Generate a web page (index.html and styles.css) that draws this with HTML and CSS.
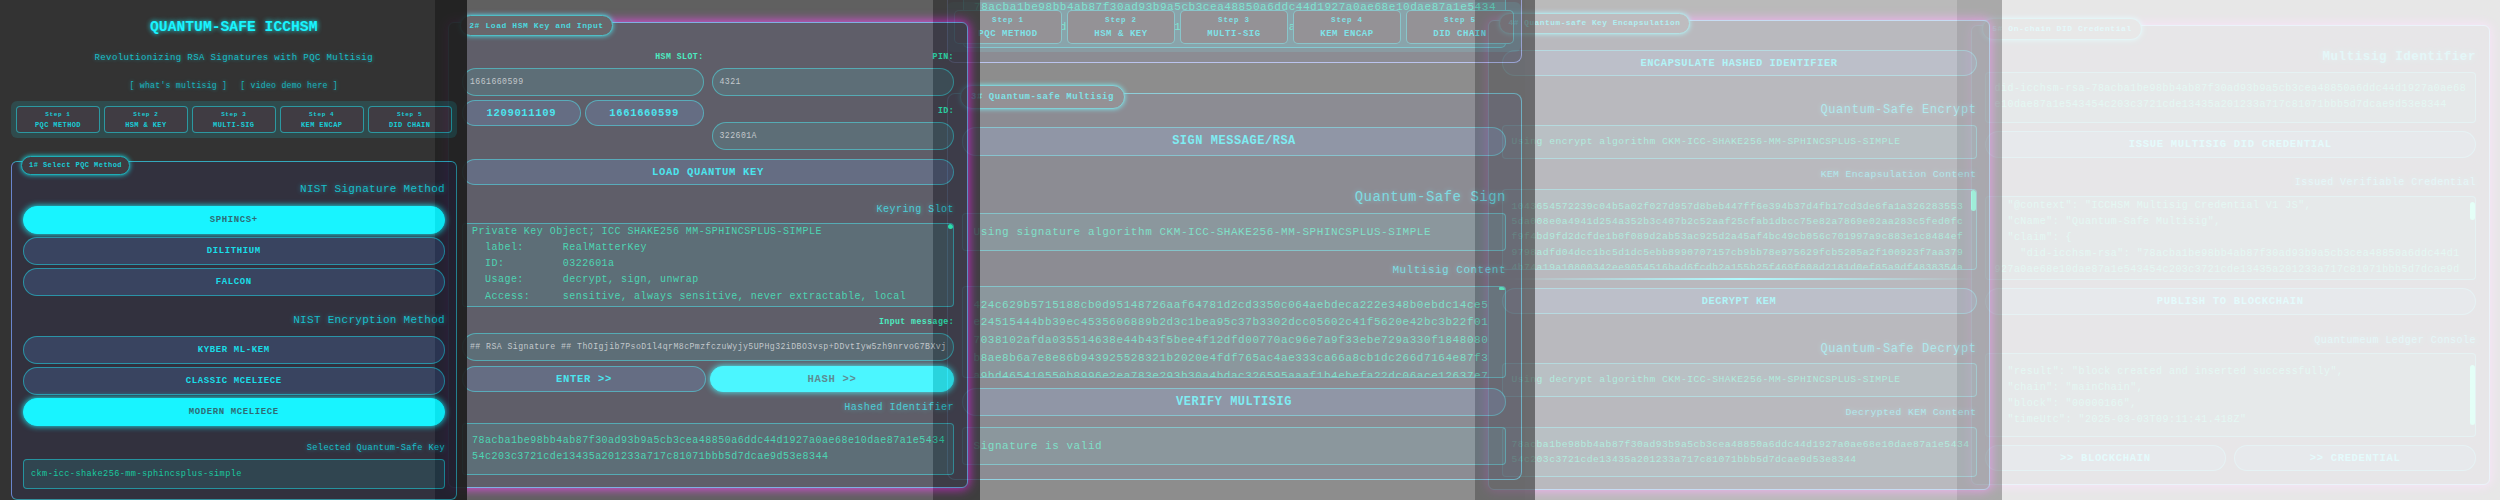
FILE: index.html
```html
<!DOCTYPE html>
<html lang="en">
<head>
<meta charset="utf-8">
<title>Quantum-Safe ICCHSM</title>
<link rel="stylesheet" href="styles.css">
</head>
<body>
<main class="strip">

<section class="slide slide-1">
  <h1 class="title">QUANTUM-SAFE ICCHSM</h1>
  <p class="subtitle">Revolutionizing RSA Signatures with PQC Multisig</p>
  <nav class="links"><a>[ what's multisig ]</a><a>[ video demo here ]</a></nav>
  <div class="steps">
    <div class="step"><span>Step 1</span><b>PQC METHOD</b></div>
    <div class="step"><span>Step 2</span><b>HSM &amp; KEY</b></div>
    <div class="step"><span>Step 3</span><b>MULTI-SIG</b></div>
    <div class="step"><span>Step 4</span><b>KEM ENCAP</b></div>
    <div class="step"><span>Step 5</span><b>DID CHAIN</b></div>
  </div>
  <div class="panel">
    <div class="pill">1# Select PQC Method</div>
    <h2 class="heading">NIST Signature Method</h2>
    <div class="btn active">SPHINCS+</div>
    <div class="btn">DILITHIUM</div>
    <div class="btn">FALCON</div>
    <h2 class="heading">NIST Encryption Method</h2>
    <div class="btn">KYBER ML-KEM</div>
    <div class="btn">CLASSIC MCELIECE</div>
    <div class="btn active">MODERN MCELIECE</div>
    <h3 class="label">Selected Quantum-Safe Key</h3>
    <div class="box one-line">ckm-icc-shake256-mm-sphincsplus-simple</div>
  </div>
</section>

<section class="slide slide-2">
  <div class="panel hot">
    <div class="pill">2# Load HSM Key and Input</div>
    <div class="fields">
      <div class="field-col">
        <div class="caption">HSM SLOT:</div>
        <div class="input">1661660599</div>
        <div class="pair"><div class="btn">1209011109</div><div class="btn">1661660599</div></div>
      </div>
      <div class="field-col">
        <div class="caption">PIN:</div>
        <div class="input">4321</div>
        <div class="caption second">ID:</div>
        <div class="input">322601A</div>
      </div>
    </div>
    <div class="btn">LOAD QUANTUM KEY</div>
    <h3 class="label">Keyring Slot</h3>
    <div class="box area"><pre class="lines">Private Key Object; ICC SHAKE256 MM-SPHINCSPLUS-SIMPLE
  label:      RealMatterKey
  ID:         0322601a
  Usage:      decrypt, sign, unwrap
  Access:     sensitive, always sensitive, never extractable, local</pre><i class="thumb"></i></div>
    <div class="caption">Input message:</div>
    <div class="input">## RSA Signature ## ThOIgjib7PsoD1l4qrM8cPmzfczuWyjy5UPHg32iDBO3vsp+DDvtIyw5zh9nrvoG7BXvj</div>
    <div class="pair"><div class="btn">ENTER &gt;&gt;</div><div class="btn active">HASH &gt;&gt;</div></div>
    <h3 class="label">Hashed Identifier</h3>
    <div class="box two-line"><pre class="lines">78acba1be98bb4ab87f30ad93b9a5cb3cea48850a6ddc44d1927a0ae68e10dae87a1e5434
54c203c3721cde13435a201233a717c81071bbb5d7dcae9d53e8344</pre></div>
  </div>
</section>

<section class="slide slide-3">
  <div class="panel-end"><div class="box-end"><pre class="lines">78acba1be98bb4ab87f30ad93b9a5cb3cea48850a6ddc44d1927a0ae68e10dae87a1e5434
54c203c3721cde13435a201233a717c81071bbb5d7dcae9d53e8344</pre></div></div>
  <div class="steps">
    <div class="step"><span>Step 1</span><b>PQC METHOD</b></div>
    <div class="step"><span>Step 2</span><b>HSM &amp; KEY</b></div>
    <div class="step"><span>Step 3</span><b>MULTI-SIG</b></div>
    <div class="step"><span>Step 4</span><b>KEM ENCAP</b></div>
    <div class="step"><span>Step 5</span><b>DID CHAIN</b></div>
  </div>
  <div class="panel">
    <div class="pill">3# Quantum-safe Multisig</div>
    <div class="btn">SIGN MESSAGE/RSA</div>
    <h2 class="heading">Quantum-Safe Sign</h2>
    <div class="box one-line">Using signature algorithm CKM-ICC-SHAKE256-MM-SPHINCSPLUS-SIMPLE</div>
    <h3 class="label">Multisig Content</h3>
    <div class="box area"><pre class="lines">424c629b5715188cb0d95148726aaf64781d2cd3350c064aebdeca222e348b0ebdc14ce5
e24515444bb39ec4535606889b2d3c1bea95c37b3302dcc05602c41f5620e42bc3b22f01
7038102afda035514638e44b43f5bee4f12dfd00770ac96e7a9f33ebe729a330f1848080
b8ae8b6a7e8e86b943925528321b2020e4fdf765ac4ae333ca66a8cb1dc266d7164e87f3
a9bd465410550b8996e2ea783e293b30a4bdac326595aaaf1b4ebefa22dc06ace12637e7</pre><i class="thumb"></i></div>
    <div class="btn">VERIFY MULTISIG</div>
    <div class="box one-line">Signature is valid</div>
  </div>
</section>

<section class="slide slide-4">
  <div class="panel hot">
    <div class="pill">4# Quantum-safe Key Encapsulation</div>
    <div class="btn">ENCAPSULATE HASHED IDENTIFIER</div>
    <h2 class="heading">Quantum-Safe Encrypt</h2>
    <div class="box one-line">Using encrypt algorithm CKM-ICC-SHAKE256-MM-SPHINCSPLUS-SIMPLE</div>
    <h3 class="label">KEM Encapsulation Content</h3>
    <div class="box area"><pre class="lines">1043654572239c04b5a02f027d957d8beb447ff6e394b37d4fb17cd3de6fa1a326283553
5da008e0a4941d254a352b3c407b2c52aaf25cfab1dbcc75e82a7869e02aa283c5fed0fc
f9f4bd9fd2dcfde1b0f089d2ab53ac925d2a45af4bc49cb056c701997a9c883e1c8484ef
9798adfd04dcc1bc5d1dc5ebb8990707157cb9bb78e975629fcb5205a2f100923f7aa379
4b74a19a10800342ee9054516bad6fcdb2a155b25f469f808d2181d0ef85a9df4838354a</pre><i class="thumb"></i></div>
    <div class="divider"></div>
    <div class="btn">DECRYPT KEM</div>
    <h2 class="heading">Quantum-Safe Decrypt</h2>
    <div class="box one-line">Using decrypt algorithm CKM-ICC-SHAKE256-MM-SPHINCSPLUS-SIMPLE</div>
    <h3 class="label">Decrypted KEM Content</h3>
    <div class="box two-line"><pre class="lines">78acba1be98bb4ab87f30ad93b9a5cb3cea48850a6ddc44d1927a0ae68e10dae87a1e5434
54c203c3721cde13435a201233a717c81071bbb5d7dcae9d53e8344</pre></div>
  </div>
</section>

<section class="slide slide-5">
  <div class="panel hot">
    <div class="pill">5# On-chain DID Credential</div>
    <h2 class="heading">Multisig Identifier</h2>
    <div class="box two-line"><pre class="lines">did-icchsm-rsa-78acba1be98bb4ab87f30ad93b9a5cb3cea48850a6ddc44d1927a0ae68
e10dae87a1e543454c203c3721cde13435a201233a717c81071bbb5d7dcae9d53e8344</pre></div>
    <div class="btn">ISSUE MULTISIG DID CREDENTIAL</div>
    <h3 class="label">Issued Verifiable Credential</h3>
    <div class="box area"><pre class="lines">  "@context": "ICCHSM Multisig Credential V1 JS",
  "cName": "Quantum-Safe Multisig",
  "claim": {
    "did-icchsm-rsa": "78acba1be98bb4ab87f30ad93b9a5cb3cea48850a6ddc44d1
927a0ae68e10dae87a1e543454c203c3721cde13435a201233a717c81071bbb5d7dcae9d</pre><i class="thumb"></i></div>
    <div class="btn">PUBLISH TO BLOCKCHAIN</div>
    <h3 class="label">Quantumeum Ledger Console</h3>
    <div class="box area ledger"><pre class="lines">  "result": "block created and inserted successfully",
  "chain": "mainChain",
  "block": "00000166",
  "timeUtc": "2025-03-03T09:11:41.418Z"</pre><i class="thumb"></i></div>
    <div class="pair"><div class="btn">&gt;&gt; BLOCKCHAIN</div><div class="btn">&gt;&gt; CREDENTIAL</div></div>
  </div>
</section>

</main>
</body>
</html>
```

FILE: styles.css
```css
* { box-sizing: border-box; }

:root {
  --cyan: #00f3ff;
  --mint: #00e5a8;
  --line: rgba(0, 243, 255, 0.45);
}

body {
  margin: 0;
  background: #fff;
  font-family: "Liberation Mono", "Courier New", monospace;
}

h1, h2, h3, p, pre { margin: 0; font: inherit; }

.strip {
  display: flex;
  width: 2500px;
  height: 500px;
  overflow: hidden;
}

/* Every later slide tucks under the one before it and fades a step further. */
.slide {
  position: relative;
  flex: none;
  height: 500px;
  overflow: hidden;
  background: #1d1d1d;
  color: var(--cyan);
}
.slide-1 { width: 467px; z-index: 5; opacity: 0.9; padding: 0 10.5px 0 11px; }
.slide-2 { width: 545px; z-index: 4; opacity: 0.7; margin-left: -32px; padding: 22px 12px 0 13px; }
.slide-3 { width: 602px; z-index: 3; opacity: 0.5; margin-left: -47px; padding: 0 13px 0 14px; }
.slide-4 { width: 527px; z-index: 2; opacity: 0.3; margin-left: -60px; padding: 20px 12px 0 13px; }
.slide-5 { width: 543px; z-index: 1; opacity: 0.1; margin-left: -45px; padding: 24.5px 10px 0 13.5px; }

/* Page header */
.title {
  margin-top: 17px;
  font-size: 14.7px;
  font-weight: bold;
  line-height: 20px;
  text-align: center;
  text-shadow: 0 0 5px var(--cyan);
}
.subtitle {
  margin-top: 13px;
  font-size: 9px;
  line-height: 16px;
  letter-spacing: 0.4px;
  text-align: center;
  color: #00b9c4;
  text-shadow: 0 0 4px var(--line);
}
.links {
  display: flex;
  justify-content: center;
  gap: 13px;
  margin-top: 12px;
  font-size: 8.2px;
  line-height: 16px;
  letter-spacing: 0.23px;
  color: #00adb8;
  text-shadow: 0 0 4px var(--line);
}

/* Step bar */
.steps {
  display: flex;
  gap: 4px;
  height: 37px;
  margin-top: 7px;
  padding: 5px;
  border-radius: 6px;
  background: rgba(0, 243, 255, 0.13);
}
.step {
  display: flex;
  flex: 1;
  flex-direction: column;
  align-items: center;
  padding-top: 1.5px;
  border: 1px solid rgba(0, 243, 255, 0.5);
  border-radius: 4px;
  background: #2c272f;
  color: #00c8d3;
  white-space: nowrap;
}
.step span { font-size: 6px; font-weight: bold; line-height: 11px; letter-spacing: 0.6px; }
.step b { font-size: 7px; line-height: 10px; letter-spacing: 0.4px; }

/* Panels */
.panel {
  position: relative;
  display: grid;
  align-items: end;
  border: 1px solid #4f86c6;
  border-top-color: #1f9fb5;
  border-radius: 6px;
  background: #1c1b2a;
}
.panel.hot { border-color: #4a8fd8; box-shadow: 0 0 11px 1px #d800d8; }
.pill {
  position: absolute;
  border: 1px solid #06a5b0;
  border-radius: 12px;
  background: #2b262d;
  box-shadow: 0 0 5px #00dbe6;
  font-weight: bold;
  text-align: center;
  white-space: nowrap;
  color: #00c8d3;
}

.btn {
  display: flex;
  align-items: center;
  justify-content: center;
  height: var(--btn-h);
  border: 1px solid var(--line);
  border-radius: 14px;
  background: #24304f;
  font-size: var(--btn-fs);
  font-weight: bold;
  letter-spacing: var(--btn-ls);
  white-space: nowrap;
  color: #00dbe6;
}
.btn.active {
  border-color: var(--cyan);
  background: var(--cyan);
  box-shadow: 0 0 6px var(--cyan);
  color: #1a5b66;
}
.pair { display: grid; grid-template-columns: 1fr 1fr; gap: var(--pair-gap, 4px); }

.heading, .label, .caption {
  line-height: 16px;
  text-align: right;
  white-space: nowrap;
}
.heading, .label { color: #00b9c6; text-shadow: 0 0 5px var(--line); }
.heading { font-size: var(--head-fs); letter-spacing: var(--head-ls); }
.label { font-size: var(--label-fs); letter-spacing: var(--label-ls); }
.caption { font-size: 8.2px; font-weight: bold; letter-spacing: 0.45px; color: var(--mint); }

.box {
  position: relative;
  overflow: hidden;
  border: 1px solid var(--line);
  border-radius: 4px;
  background: #1a313e;
  padding-left: var(--box-pad);
  font-size: var(--text-fs);
  letter-spacing: var(--text-ls);
  color: #00c494;
  white-space: pre;
}
.one-line { display: flex; align-items: center; height: var(--one-h); }
.two-line { display: flex; align-items: center; height: var(--two-h); }
.lines { line-height: var(--lh); }
.area { height: var(--area-h); padding-top: var(--area-pad, 0); }

/* Scrollbar thumb */
.thumb {
  position: absolute;
  top: 0;
  right: 0;
  width: 5px;
  height: 5px;
  border-radius: 3px;
  background: #00ffb4;
}

.input {
  height: 28px;
  padding: 0 6px 0 7px;
  overflow: hidden;
  border: 1px solid var(--line);
  border-radius: 14px;
  background: #1a313e;
  font-size: 8.2px;
  line-height: 26px;
  letter-spacing: 0.44px;
  white-space: nowrap;
  color: #aab3b8;
}

/* Slide 1 */
.slide-1 {
  --btn-h: 28px; --btn-fs: 9px; --btn-ls: 0.6px;
  --head-fs: 11px; --head-ls: 0.3px;
  --label-fs: 8.6px; --label-ls: 0.37px;
  --text-fs: 8.6px; --text-ls: 0.39px;
  --box-pad: 7.5px; --one-h: 30.5px;
}
.slide-1 .panel {
  margin-top: 23px;
  height: 338.5px;
  padding: 0 10.5px;
  grid-template-rows: 35px 36.5px 31px 31px 32px 36px 31px 31.5px 30px 33px;
  border-left-color: #5a78c8;
  border-right-color: #1d8494;
  border-bottom-color: #1d8494;
}
.slide-1 .pill { top: -6.5px; left: 9px; width: 109px; height: 19px; font-size: 7px; line-height: 17px; letter-spacing: 0.45px; }

/* Slide 2 */
.slide-2 {
  --btn-h: 26px; --btn-fs: 10.6px; --btn-ls: 0.63px;
  --label-fs: 10px; --label-ls: 0.45px;
  --text-fs: 10px; --text-ls: 0.48px; --lh: 16.15px;
  --box-pad: 9px; --two-h: 51.5px; --area-h: 84px;
}
.slide-2 .panel {
  height: 466px;
  padding: 0 13px;
  grid-template-columns: minmax(0, 1fr);
  grid-template-rows: 127.5px 34px 33.5px 89px 23px 31px 30.5px 24.5px 58.5px;
}
.slide-2 .pill { top: -8px; left: 11px; width: 153px; height: 21px; font-size: 8px; line-height: 19px; letter-spacing: 0.58px; }
.fields { display: grid; grid-template-columns: 241.5px 242.5px; gap: 8px; height: 127.5px; padding-top: 26px; }
.field-col { display: flex; flex-direction: column; }
.field-col .input { margin-top: 3px; }
.field-col .pair { margin-top: 4px; }
.caption.second { margin-top: 7px; }

/* Slide 3 */
.slide-3 {
  --btn-h: 28.5px; --btn-fs: 12px; --btn-ls: 0.53px;
  --head-fs: 14px; --head-ls: 0.5px;
  --label-fs: 11px; --label-ls: 0.5px;
  --text-fs: 11px; --text-ls: 0.55px; --lh: 17.8px;
  --box-pad: 10.5px; --one-h: 38px; --area-h: 92px; --area-pad: 9.5px;
}
.panel-end {
  height: 62.5px;
  padding: 0 15px;
  border: solid #7a8ae0;
  border-width: 0 1px 1px;
  border-radius: 0 0 8px 8px;
  background: #1c1b2a;
}
.box-end {
  height: 48px;
  padding-left: 10px;
  overflow: hidden;
  border: solid var(--line);
  border-width: 0 1px 1px;
  border-radius: 0 0 5px 5px;
  background: #1a313e;
  font-size: var(--text-fs);
  letter-spacing: var(--text-ls);
  color: #00c494;
}
.box-end .lines { margin-top: -2px; line-height: 19.5px; }
.slide-3 .steps {
  position: absolute;
  top: 2px;
  left: 14px;
  width: 574px;
  height: 50px;
  margin: 0;
  padding: 8px 7px;
  gap: 5px;
  background: rgba(0, 243, 255, 0.14);
}
.slide-3 .step { border-radius: 5px; padding-top: 2px; }
.slide-3 .step span { font-size: 7.5px; line-height: 14px; letter-spacing: 0.8px; }
.slide-3 .step b { font-size: 9px; line-height: 14px; letter-spacing: 0.55px; }
.slide-3 .panel {
  margin-top: 30.5px;
  height: 387px;
  padding: 0 15px 0 14px;
  border-right-color: #2aa6c4;
  border-bottom-color: #2aa6c4;
  border-radius: 8px;
  grid-template-rows: 61.5px 49.5px 45.5px 27.5px 100px 38px 48.5px;
}
.slide-3 .pill { top: -9px; left: 12px; width: 165px; height: 24px; font-size: 9px; line-height: 22px; letter-spacing: 0.56px; }
.slide-3 .thumb { width: 6px; height: 3px; border-radius: 1px; }

/* Slide 4 */
.slide-4 {
  --btn-h: 25.5px; --btn-fs: 10.4px; --btn-ls: 0.56px;
  --head-fs: 12px; --head-ls: 0.6px;
  --label-fs: 9.7px; --label-ls: 0.42px;
  --text-fs: 9.7px; --text-ls: 0.46px; --lh: 15.4px;
  --box-pad: 9px; --one-h: 34px; --two-h: 50px; --area-h: 80.5px; --area-pad: 8.5px;
}
.slide-4 .panel {
  height: 469.5px;
  padding: 0 12.5px;
  grid-template-rows: 54.5px 42.5px 40.5px 24px 87px 10.5px 33.5px 43.5px 39.5px 24.5px 56px;
}
.slide-4 .pill { top: -8px; left: 10px; width: 191px; height: 21px; font-size: 7.8px; line-height: 19px; letter-spacing: 0.53px; }
.slide-4 .thumb { height: 21px; }
.divider { height: 2px; background: linear-gradient(90deg, transparent, var(--cyan), transparent); }

/* Slide 5 */
.slide-5 {
  --btn-h: 26.5px; --btn-fs: 10.6px; --btn-ls: 0.64px;
  --head-fs: 12.5px; --head-ls: 0.58px;
  --label-fs: 10px; --label-ls: 0.47px;
  --text-fs: 10px; --text-ls: 0.46px; --lh: 16.15px;
  --box-pad: 9px; --two-h: 50.5px; --area-h: 84.5px; --area-pad: 1px; --pair-gap: 8px;
}
.slide-5 .panel {
  height: 460.5px;
  padding: 0 13px;
  grid-template-rows: 39.5px 57.5px 35px 33.5px 89px 34.5px 34px 88.5px 34px;
}
.slide-5 .pill { top: -7.5px; left: 10.5px; width: 160px; height: 22px; font-size: 8px; line-height: 20px; letter-spacing: 0.57px; }
.slide-5 .heading { font-weight: bold; }
.slide-5 .thumb { top: 5px; height: 18px; }
.slide-5 .ledger { padding-top: 10px; }
.slide-5 .ledger .thumb { top: 11px; height: 60px; }
```
